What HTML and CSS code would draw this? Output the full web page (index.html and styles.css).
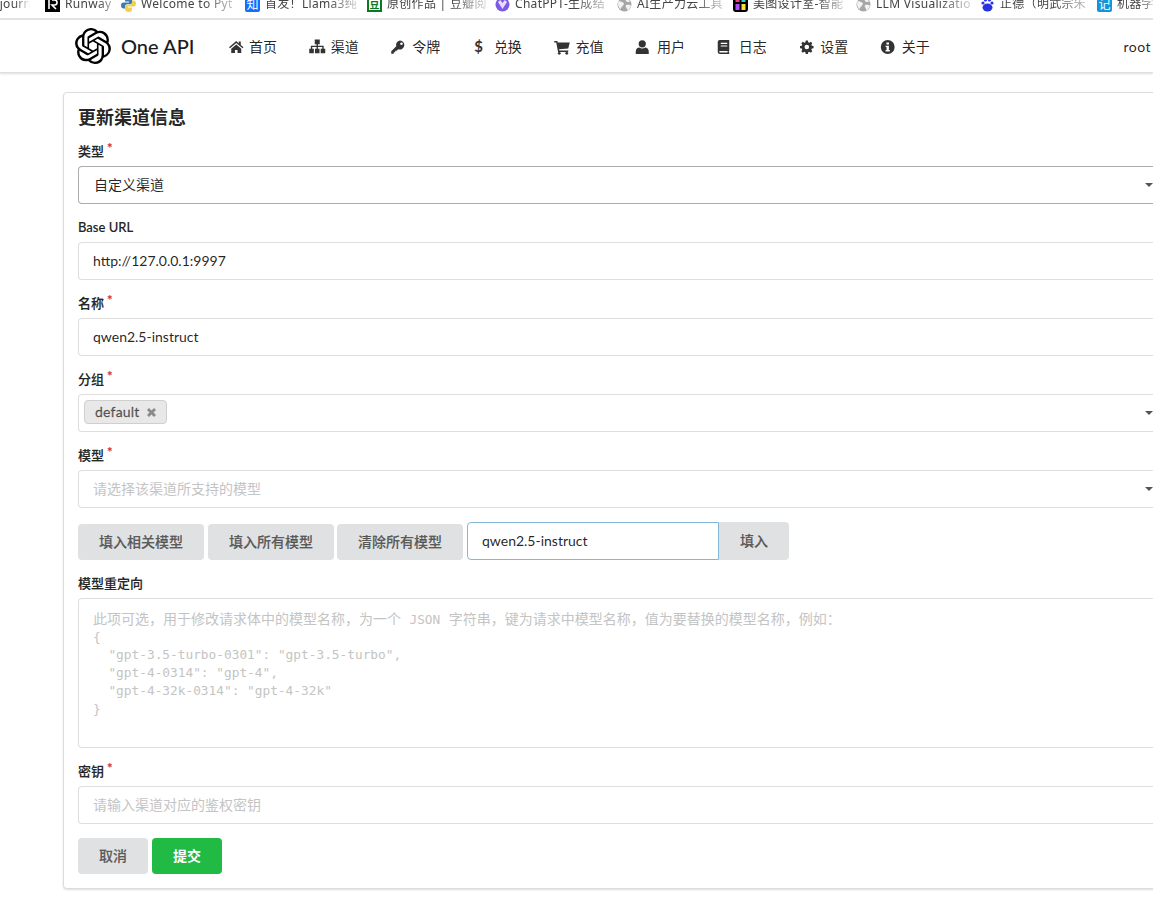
FILE: index.html
```html
<!DOCTYPE html>
<html lang="zh">
<head>
<meta charset="utf-8">
<title>One API</title>
<link rel="stylesheet" href="styles.css">
</head>
<body>
<div class="bookmarks">
  <a class="bm bm-a"><span class="bm-text">djourn</span></a>
  <a class="bm bm-b"><svg class="bm-icon" viewBox="0 0 15 15"><rect width="15" height="15" fill="#000"/><path d="M4 3v9M7 3h2.500a2 2 0 0 1 0 5H7l4 4" fill="none" stroke="#fff" stroke-width="1.600"/></svg><span class="bm-text">Runway</span></a>
  <a class="bm bm-c"><svg class="bm-icon" viewBox="0 0 15 15"><path d="M7.500 0C4.500 0 4 1.500 4 2.800V4.500h4v1H2.500C1 5.500 0 6.800 0 8.500s1 3 2.500 3H4V9.500c0-1.200 1-2.200 2.200-2.200h3c1 0 1.800-.8 1.800-1.800V2.800C11 1 9.500 0 7.500 0z" fill="#3d7ab0"/><path d="M7.500 15c3 0 3.500-1.500 3.500-2.800v-1.700H7v-1h5.500C14 9.500 15 8.200 15 6.500s-1-3-2.500-3H11v2c0 1.200-1 2.200-2.200 2.200h-3c-1 0-1.800.8-1.800 1.800v2.700C4 14 5.500 15 7.500 15z" fill="#f5cf4b"/></svg><span class="bm-text">Welcome to Pyt</span></a>
  <a class="bm bm-d"><span class="bm-box bm-zhihu">知</span><span class="bm-text">首发！Llama3纯</span></a>
  <a class="bm bm-e"><span class="bm-box bm-douban">豆</span><span class="bm-text">原创作品 | 豆瓣阅</span></a>
  <a class="bm bm-f"><svg class="bm-icon" viewBox="0 0 15 15"><circle cx="7.500" cy="7.500" r="7" fill="#7b5be6"/><path d="M3 5l4.500 7L12 5l-2.200-2-2.300 3-2.300-3z" fill="#e9dcff"/></svg><span class="bm-text">ChatPPT-生成结</span></a>
  <a class="bm bm-g"><svg class="bm-icon" viewBox="0 0 15 15"><use href="#globe"/></svg><span class="bm-text">AI生产力云工具</span></a>
  <a class="bm bm-h"><svg class="bm-icon" viewBox="0 0 15 15"><rect width="15" height="15" rx="3" fill="#000"/><rect x="2.500" y="2" width="4" height="3" fill="#ff3b7f"/><rect x="8.500" y="2" width="4" height="3" fill="#36d1c4"/><rect x="2.500" y="7" width="4" height="6" fill="#b14dff"/><rect x="8.500" y="7" width="4" height="6" fill="#f6e33a"/></svg><span class="bm-text">美图设计室-智能</span></a>
  <a class="bm bm-i"><svg class="bm-icon" viewBox="0 0 15 15"><use href="#globe"/></svg><span class="bm-text">LLM Visualizatio</span></a>
  <a class="bm bm-j"><svg class="bm-icon" viewBox="0 0 15 15"><ellipse cx="7.500" cy="10.500" rx="5" ry="4" fill="#2932e1"/><circle cx="3" cy="6" r="1.600" fill="#2932e1"/><circle cx="12" cy="6" r="1.600" fill="#2932e1"/><circle cx="5.500" cy="3" r="1.600" fill="#2932e1"/><circle cx="9.500" cy="3" r="1.600" fill="#2932e1"/></svg><span class="bm-text">正德（明武宗朱</span></a>
  <a class="bm bm-k"><span class="bm-box bm-note">记</span><span class="bm-text">机器学习</span></a>
</div>

<svg class="sprite" aria-hidden="true">
  <symbol id="globe" viewBox="0 0 15 15"><circle cx="7.500" cy="7.500" r="7" fill="#a6a6a6"/><path d="M1.500 4c2 0 3 1 4.500 1.500S7 8 5.500 9 4 12 3.500 12 1 9 1 7zM9 1.500c1 1 3 1 4 3-1 1-2.500.5-3.500 0S8.500 2.500 9 1.500zM9 8c2-.5 4-.5 5 .5-.5 2.500-2 4-3.500 5C10 11 8 10 9 8z" fill="#f2f2f2"/></symbol>
</svg>

<nav class="nav">
  <a class="brand">
    <svg class="brand-logo" viewBox="0 0 24 24"><path d="M22.2819 9.8211a5.9847 5.9847 0 0 0-.5157-4.9108 6.0462 6.0462 0 0 0-6.5098-2.9A6.0651 6.0651 0 0 0 4.9807 4.1818a5.9847 5.9847 0 0 0-3.9977 2.9 6.0462 6.0462 0 0 0 .7427 7.0966 5.98 5.98 0 0 0 .511 4.9107 6.051 6.051 0 0 0 6.5146 2.9001A5.9847 5.9847 0 0 0 13.2599 24a6.0557 6.0557 0 0 0 5.7718-4.2058 5.9894 5.9894 0 0 0 3.9977-2.9001 6.0557 6.0557 0 0 0-.7475-7.0729zm-9.022 12.6081a4.4755 4.4755 0 0 1-2.8764-1.0408l.1419-.0804 4.7783-2.7582a.7948.7948 0 0 0 .3927-.6813v-6.7369l2.02 1.1686a.071.071 0 0 1 .038.052v5.5826a4.504 4.504 0 0 1-4.4945 4.4944zm-9.6607-4.1254a4.4708 4.4708 0 0 1-.5346-3.0137l.142.0852 4.783 2.7582a.7712.7712 0 0 0 .7806 0l5.8428-3.3685v2.3324a.0804.0804 0 0 1-.0332.0615L9.74 19.9502a4.4992 4.4992 0 0 1-6.1408-1.6464zM2.3408 7.8956a4.485 4.485 0 0 1 2.3655-1.9728V11.6a.7664.7664 0 0 0 .3879.6765l5.8144 3.3543-2.0201 1.1685a.0757.0757 0 0 1-.071 0l-4.8303-2.7865A4.504 4.504 0 0 1 2.3408 7.872zm16.5963 3.8558L13.1038 8.364 15.1192 7.2a.0757.0757 0 0 1 .071 0l4.8303 2.7913a4.4944 4.4944 0 0 1-.6765 8.1042v-5.6772a.79.79 0 0 0-.407-.667zm2.0107-3.0231l-.142-.0852-4.7735-2.7818a.7759.7759 0 0 0-.7854 0L9.409 9.2297V6.8974a.0662.0662 0 0 1 .0284-.0615l4.8303-2.7866a4.4992 4.4992 0 0 1 6.6802 4.66zM8.3065 12.863l-2.02-1.1638a.0804.0804 0 0 1-.038-.0567V6.0742a4.4992 4.4992 0 0 1 7.3757-3.4537l-.142.0805L8.704 5.459a.7948.7948 0 0 0-.3927.6813zm1.0976-2.3654l2.602-1.4998 2.6069 1.4998v2.9994l-2.5974 1.4997-2.6067-1.4997Z"/></svg>
    <span class="brand-name">One API</span>
  </a>
  <a class="nav-item"><svg class="nav-icon" viewBox="0 0 16 16"><path d="M8 2 0.800 8.200l.9 1.100L8 3.900l6.300 5.400.9-1.100-2.700-2.300V2.500h-2v2L8 2zM3 9.700V14h3.700v-3h2.600v3H13V9.700L8 5.400z"/></svg>首页</a>
  <a class="nav-item"><svg class="nav-icon" viewBox="1 1.500 14 14"><path d="M5.800 2h4.400v4H8.600v1.500h5V10H15v4h-4v-4h1.400V8.600H8.600V10H10v4H6v-4h1.400V8.600H3.600V10H5v4H1v-4h1.400V7.500h5V6H5.800z"/></svg>渠道</a>
  <a class="nav-item"><svg class="nav-icon" viewBox="1.500 0 16 16"><path fill-rule="evenodd" d="M10.200 1.500a4.500 4.500 0 1 1-1.700 8.700L7 11.700H5.500v1.600H4v1.500H1.500v-2.500l5-5a4.500 4.500 0 0 1 3.700-5.800zm1.500 2a1.300 1.300 0 1 0 0 2.600 1.300 1.300 0 0 0 0-2.600z"/></svg>令牌</a>
  <a class="nav-item"><span class="nav-glyph">$</span>兑换</a>
  <a class="nav-item"><svg class="nav-icon" viewBox="0 0 16 16"><path d="M0 2h3l.5 1.500H15.500L14 9.500 4.800 10.300l.3 1.200H14V13H3.800L2 3.500H0z"/><circle cx="5" cy="14.300" r="1.400"/><circle cx="12.500" cy="14.300" r="1.400"/></svg>充值</a>
  <a class="nav-item"><svg class="nav-icon" viewBox="1 0 16 16"><circle cx="8" cy="4.800" r="3.600"/><path d="M1.500 15v-2.500C1.500 10 3.500 8.500 5 8.500c1 .7 2 1 3 1s2-.3 3-1c1.500 0 3.500 1.500 3.500 4V15z"/></svg>用户</a>
  <a class="nav-item"><svg class="nav-icon" viewBox="1.500 0 16 16"><path fill-rule="evenodd" d="M4 1h9.500v10.700c-.4.3-.5.700-.5 1s.1.700.5 1v1.300H4.300C3 15 2 14 2 12.700V3C2 1.900 2.900 1 4 1zM5 3.800V5h6.500V3.800zm0 2.600v1.200h6.500V6.400zM4.300 12c-.6 0-.9.300-.9.700s.3.700.9.700h7.600c-.1-.5-.1-.9 0-1.400z"/></svg>日志</a>
  <a class="nav-item"><svg class="nav-icon" viewBox="-0.500 -0.400 18 18"><path fill-rule="evenodd" d="M6.800 1.200h2.400l.4 2 1.200.5 1.700-1.100 1.700 1.700-1.100 1.700.5 1.200 2 .4v2.400l-2 .4-.5 1.200 1.100 1.700-1.700 1.700-1.700-1.100-1.200.5-.4 2H6.800l-.4-2-1.200-.5-1.700 1.100-1.700-1.700 1.100-1.700-.5-1.200-2-.4V7.600l2-.4.5-1.200-1.100-1.700 1.700-1.700 1.700 1.100 1.200-.5zM8 6a2.600 2.600 0 1 0 0 5.200A2.600 2.600 0 0 0 8 6z"/></svg>设置</a>
  <a class="nav-item"><svg class="nav-icon" viewBox="1 0.500 15 15"><path fill-rule="evenodd" d="M8 1.500a6.500 6.500 0 1 1 0 13 6.500 6.500 0 0 1 0-13zM6.800 3.700v2h2.400v-2zM6 6.800v1.300h.9v2.800H6v1.300h4v-1.300h-.9V6.800z"/></svg>关于</a>
  <a class="nav-user">root</a>
</nav>

<main class="page">
  <form class="card">
    <h2 class="card-title">更新渠道信息</h2>

    <div class="field">
      <label class="label required">类型</label>
      <div class="select select-active"><span class="select-value">自定义渠道</span><i class="caret"></i></div>
    </div>

    <div class="field">
      <label class="label">Base URL</label>
      <input class="input" type="text" value="http://127.0.0.1:9997">
    </div>

    <div class="field">
      <label class="label required">名称</label>
      <input class="input" type="text" value="qwen2.5-instruct">
    </div>

    <div class="field">
      <label class="label required">分组</label>
      <div class="select select-tags">
        <span class="tag">default<svg class="tag-x" viewBox="0 0 11 11"><path d="M1 3l2-2 2.500 2.500L8 1l2 2-2.500 2.500L10 8l-2 2-2.500-2.500L3 10 1 8l2.500-2.500z"/></svg></span>
        <i class="caret"></i>
      </div>
    </div>

    <div class="field">
      <label class="label required">模型</label>
      <div class="select"><span class="select-placeholder">请选择该渠道所支持的模型</span><i class="caret"></i></div>
    </div>

    <div class="field action-row">
      <button class="btn" type="button">填入相关模型</button>
      <button class="btn" type="button">填入所有模型</button>
      <button class="btn" type="button">清除所有模型</button>
      <div class="input-group">
        <input class="input input-focus" type="text" value="qwen2.5-instruct">
        <button class="btn btn-attached" type="button">填入</button>
      </div>
    </div>

    <div class="field">
      <label class="label">模型重定向</label>
      <div class="textarea">
        <div class="hint-line hint-lead">此项可选，用于修改请求体中的模型名称，为一个 <span class="hint-code">JSON</span> 字符串，键为请求中模型名称，值为要替换的模型名称，例如：</div>
        <pre class="hint-line">{</pre>
        <pre class="hint-line">  "gpt-3.5-turbo-0301": "gpt-3.5-turbo",</pre>
        <pre class="hint-line">  "gpt-4-0314": "gpt-4",</pre>
        <pre class="hint-line">  "gpt-4-32k-0314": "gpt-4-32k"</pre>
        <pre class="hint-line">}</pre>
      </div>
    </div>

    <div class="field">
      <label class="label required">密钥</label>
      <input class="input" type="text" placeholder="请输入渠道对应的鉴权密钥">
    </div>

    <div class="form-actions">
      <button class="btn" type="button">取消</button>
      <button class="btn btn-green" type="button">提交</button>
    </div>
  </form>
</main>
</body>
</html>
```

FILE: styles.css
```css
* { box-sizing: border-box; }
html, body { margin: 0; height: 100%; overflow: hidden; background: #fff; }
body {
  font-family: Lato, "Noto Sans CJK SC", sans-serif;
  font-size: 14px;
  line-height: 1.4285;
  color: rgba(0, 0, 0, .87);
}
.sprite { display: none; }

/* browser bookmark bar */
.bookmarks {
  display: flex;
  align-items: flex-start;
  height: 20px;
  overflow: hidden;
  border-bottom: 2px solid #e3e3e3;
  background: #fff;
}
.bm {
  display: flex;
  flex: none;
  align-items: center;
  gap: 5px;
  height: 16px;
  margin-top: -4px;
  overflow: hidden;
}
.bm-a { width: 45px; }
.bm-b { width: 76px; }
.bm-c { width: 124px; }
.bm-d { width: 122px; }
.bm-e { width: 128px; }
.bm-f { width: 122px; }
.bm-g { width: 116px; }
.bm-h { width: 123px; }
.bm-i { width: 124px; }
.bm-j { width: 117px; }
.bm-k { width: 60px; }
.bm-a .bm-text { flex: none; width: 38px; margin-left: -8px; }
.bm-icon { flex: none; width: 15px; height: 15px; }
.bm-box {
  flex: none;
  width: 15px;
  height: 15px;
  border-radius: 2px;
  color: #fff;
  font-size: 12px;
  line-height: 15px;
  text-align: center;
}
.bm-zhihu { background: #0f6fff; }
.bm-douban { background: #fff; border: 2px solid #0b7a1e; color: #0b7a1e; font-size: 10px; line-height: 11px; border-radius: 0; font-weight: 700; }
.bm-note { background: #1296db; }
.bm-text {
  flex: 1;
  min-width: 0;
  overflow: hidden;
  font-family: "Noto Sans", "Noto Sans CJK SC", sans-serif;
  font-size: 12px;
  line-height: 16px;
  letter-spacing: .3px;
  white-space: nowrap;
  color: #444;
  -webkit-mask-image: linear-gradient(to right, #000 60%, transparent 100%);
  mask-image: linear-gradient(to right, #000 60%, transparent 100%);
}

/* top navigation */
.nav {
  position: relative;
  display: flex;
  align-items: center;
  height: 53px;
  padding: 0 2px 0 75px;
  background: #fff;
  border-bottom: 1px solid rgba(34, 36, 38, .15);
  box-shadow: 0 1px 2px 0 rgba(34, 36, 38, .15);
}
.brand { display: flex; flex: none; align-items: center; gap: 10px; width: 136.500px; }
.brand-logo { width: 36px; height: 36px; display: block; }
.brand-name { font-size: 20px; font-weight: 500; color: #1b1c1d; }
.nav-item {
  display: flex;
  align-items: center;
  margin-top: 2px;
  padding: 0 16px;
  color: rgba(0, 0, 0, .87);
  white-space: nowrap;
}
.nav-icon {
  flex: none;
  width: 16.5px;
  height: 16px;
  margin-right: 5.1px;
  fill: #333;
}
.nav-glyph {
  flex: none;
  width: 16.5px;
  margin-right: 5.1px;
  padding-left: 2px;
  font-size: 15px;
  font-weight: 700;
  color: #333;
}
.nav-user { margin-top: 2px; margin-left: auto; letter-spacing: .5px; color: rgba(0, 0, 0, .87); }

/* page card */
.page { padding: 19px 0 0 63px; }
.card {
  width: 1116px;
  padding: 14px;
  background: #fff;
  border: 1px solid #dcdcdc;
  border-radius: 4px;
  box-shadow: 0 1px 2px 0 rgba(34, 36, 38, .15);
}
.card-title {
  margin: 0 0 14px;
  font-size: 18px;
  line-height: 21px;
  font-weight: 700;
  color: rgba(0, 0, 0, .87);
}
.field { margin-bottom: 14px; }
.label {
  display: block;
  height: 18px;
  margin-bottom: 6px;
  font-size: 13px;
  line-height: 18px;
  font-weight: 500;
  -webkit-text-stroke: .2px;
  color: rgba(0, 0, 0, .87);
}
.required::after {
  content: "*";
  display: inline-block;
  margin-left: 3px;
  color: #db2828;
  font-size: 13px;
  line-height: 13px;
  vertical-align: 3px;
}

.input, .select, .textarea {
  display: block;
  width: 100%;
  background: #fff;
  border: 1px solid rgba(34, 36, 38, .15);
  border-radius: 4px;
  color: rgba(0, 0, 0, .87);
}
.input {
  height: 38px;
  padding: 0 14px 2px;
  font: inherit;
  outline: none;
}
.input::placeholder { color: #c4c4c4; opacity: 1; }
.select {
  position: relative;
  display: flex;
  align-items: center;
  height: 38px;
  padding: 0 15px;
}
.select-active { border-color: rgba(34, 36, 38, .38); }
.select-placeholder { color: #c4c4c4; margin-left: -1px; }
.select-tags { padding: 0 5px; }
.caret {
  position: absolute;
  top: 16px;
  right: 10px;
  width: 0;
  height: 0;
  border-left: 4px solid transparent;
  border-right: 4px solid transparent;
  border-top: 4px solid #555;
}
.tag {
  display: flex;
  align-items: center;
  gap: 6px;
  height: 24px;
  margin-bottom: 2px;
  padding: 0 9px 0 10px;
  background: #e8e8e8;
  border: 1px solid #cfcfcf;
  border-radius: 4px;
  font-size: 14px;
  letter-spacing: .2px;
  -webkit-text-stroke: .3px;
  color: rgba(0, 0, 0, .6);
}
.tag-x { width: 11px; height: 11px; fill: #8a8a8a; }

.btn {
  height: 36px;
  padding: 0 21px;
  border: 0;
  border-radius: 4px;
  background: #e0e1e2;
  color: rgba(0, 0, 0, .6);
  font: inherit;
  font-weight: 500;
  -webkit-text-stroke: .2px;
  white-space: nowrap;
}
.btn-green { background: #21ba45; color: #fff; font-weight: 700; -webkit-text-stroke: 0; }
.action-row { display: flex; align-items: flex-end; gap: 4px; }
.input-group { display: flex; align-items: stretch; width: 321px; }
.input-focus { flex: 1; width: auto; min-width: 0; border-color: #85b7d9; border-radius: 4px 0 0 4px; }
.btn-attached { height: 38px; width: 70px; padding: 0; flex: none; border-radius: 0 4px 4px 0; }
.action-row .btn:nth-child(2) { margin-right: -1px; }

.textarea {
  height: 150px;
  padding: 11px 14px;
  color: #c4c4c4;
}
.hint-line {
  margin: 0;
  height: 18px;
  font-family: "DejaVu Sans Mono", "Noto Sans CJK SC", monospace;
  font-size: 12.8px;
  line-height: 18px;
  white-space: pre;
}
.hint-lead { font-size: 14px; }
.hint-code { font-size: 12.8px; }
.form-actions { display: flex; gap: 4px; }
```
